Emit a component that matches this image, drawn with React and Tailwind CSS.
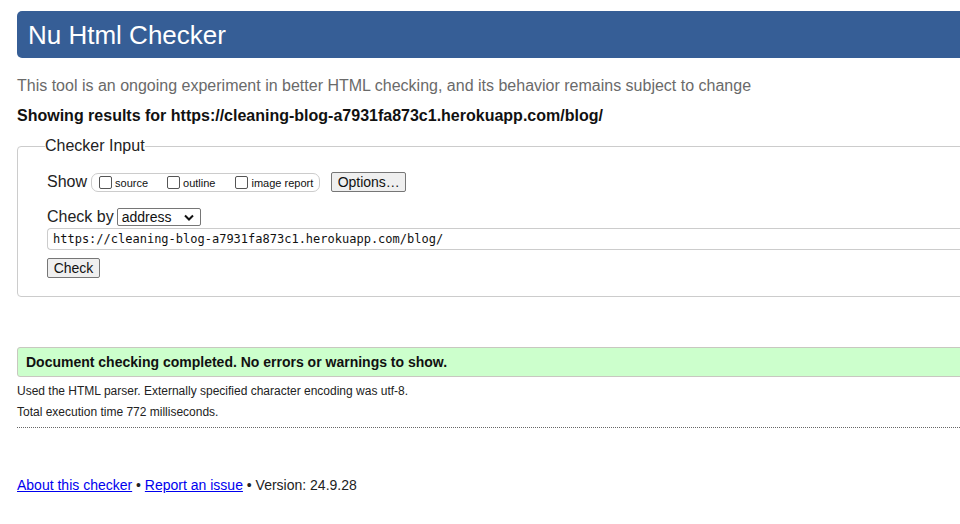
import React from 'react';

const SANS = { fontFamily: '"Liberation Sans", Arial, sans-serif' };

function Check({ label }) {
  return (
    <label className="flex shrink-0 items-center whitespace-nowrap">
      <span className="h-[13px] w-[13px] shrink-0 rounded-[2px] border border-[#555] bg-white" />
      <span className="ml-[3px] mt-[2px] text-[11px] leading-[14px] text-[#111]">{label}</span>
    </label>
  );
}

const App = () => {
  return (
    <div className="h-[524px] w-[960px] overflow-hidden bg-white text-black" style={SANS}>
      <div className="w-[1010px] pl-[17px] pt-[11px]">
        <header className="flex h-[47px] items-center rounded-[5px] bg-[#365e96] pl-[11px]">
          <h1 className="text-[26px] leading-none text-white">Nu Html Checker</h1>
        </header>

        <p className="mt-[18px] text-[16px] leading-[20px] text-[#6a6a6a]">
          This tool is an ongoing experiment in better HTML checking, and its behavior remains subject to change
        </p>
        <p className="mt-[10px] text-[16px] font-bold leading-[20px] text-[#111]">
          Showing results for https://cleaning-blog-a7931fa873c1.herokuapp.com/blog/
        </p>

        <fieldset className="mt-[10px] rounded-[4px] border border-[#ccc] pb-[18px] pl-[29px]">
          <legend className="-ml-[2px] text-[16px] leading-[20px] text-[#222]">Checker Input</legend>

          <div className="mt-[16px] flex h-[20px] items-center">
            <span className="text-[16px] text-[#222]">Show</span>
            <div className="ml-[4px] flex h-[19px] shrink-0 items-center rounded-[7px] border border-[#ccc] pl-[7px] pr-[6px]">
              <Check label="source" />
              <span className="w-[19px]" />
              <Check label="outline" />
              <span className="w-[20px]" />
              <Check label="image report" />
            </div>
            <button className="ml-[11px] flex h-[20px] w-[75px] shrink-0 items-center justify-center rounded-[2px] border border-[#767676] bg-[#efefef] text-[14px] text-[#111]">
              Options…
            </button>
          </div>

          <div className="mt-[15px] flex h-[20px] items-center">
            <span className="text-[16px] text-[#222]">Check by</span>
            <div className="ml-[3px] flex h-[18px] w-[84px] items-center justify-between rounded-[2px] border border-[#767676] bg-white pl-[4px] pr-[6px]">
              <span className="text-[14px] leading-none text-[#111]">address</span>
              <svg width="10" height="7" viewBox="0 0 10 7">
                <path d="M1 1.5 L5 5.5 L9 1.5" fill="none" stroke="#111" strokeWidth="2" />
              </svg>
            </div>
          </div>

          <div className="mt-[1px] flex h-[22px] items-center rounded-l-[4px] border border-r-0 border-[#ccc] pl-[5px]">
            <span
              className="text-[12px] leading-none text-[#111]"
              style={{ fontFamily: '"DejaVu Sans Mono", "Liberation Mono", monospace' }}
            >
              https://cleaning-blog-a7931fa873c1.herokuapp.com/blog/
            </span>
          </div>

          <button className="mt-[8px] flex h-[20px] w-[53px] items-center justify-center rounded-[2px] border border-[#767676] bg-[#efefef] text-[14px] text-[#111]">
            Check
          </button>
        </fieldset>

        <div className="mt-[50px] flex h-[30px] items-center rounded-l-[3px] border border-[#c8c8c0] bg-[#ccffcc] pl-[8px]">
          <p className="text-[14px] font-bold text-[#111]">
            Document checking completed. No errors or warnings to show.
          </p>
        </div>

        <p className="mt-[6px] text-[12px] leading-[16px] text-[#222]">
          Used the HTML parser. Externally specified character encoding was utf-8.
        </p>
        <p className="mt-[5px] text-[12px] leading-[16px] text-[#222]">
          Total execution time 772 milliseconds.
        </p>
        <div className="mt-[7px] border-t border-dotted border-[#666]" />

        <p className="mt-[49px] text-[14px] leading-[16px] text-[#222]">
          <a href="#" className="text-[#0000ee] underline">About this checker</a>
          {' • '}
          <a href="#" className="text-[#0000ee] underline">Report an issue</a>
          {' • Version: 24.9.28'}
        </p>
      </div>
    </div>
  );
};

export default App;
